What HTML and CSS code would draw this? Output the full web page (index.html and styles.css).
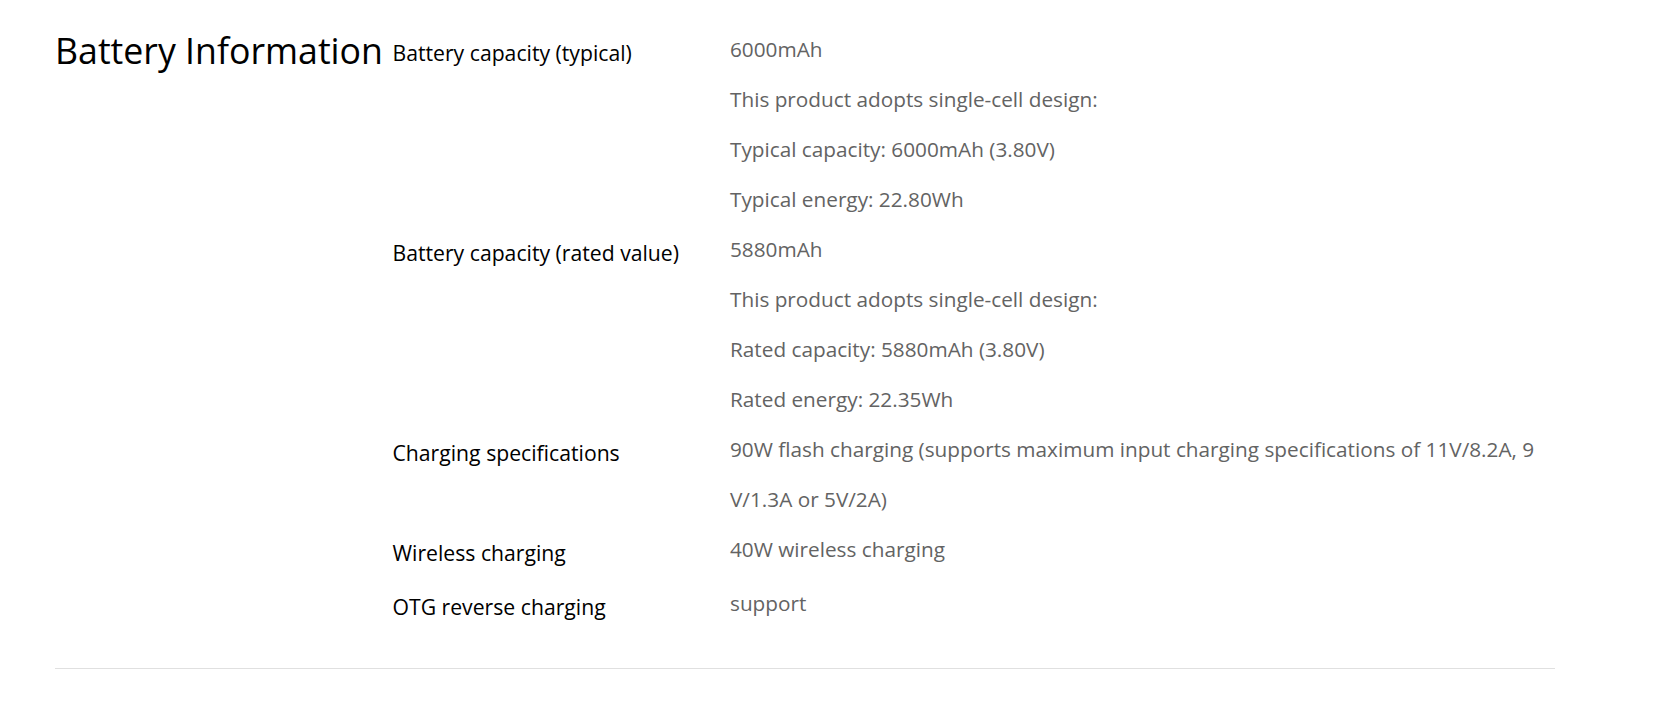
FILE: index.html
```html
<!DOCTYPE html>
<html lang="en">
<head>
<meta charset="utf-8">
<title>Battery Information</title>
<link rel="stylesheet" href="styles.css">
</head>
<body>
<section class="section">
  <h2 class="title">Battery Information</h2>
  <div class="specs">
    <div class="row">
      <div class="label">Battery capacity (typical)</div>
      <div class="value">
        <p>6000mAh</p>
        <p>This product adopts single-cell design:</p>
        <p>Typical capacity: 6000mAh (3.80V)</p>
        <p>Typical energy: 22.80Wh</p>
      </div>
    </div>
    <div class="row">
      <div class="label">Battery capacity (rated value)</div>
      <div class="value">
        <p>5880mAh</p>
        <p>This product adopts single-cell design:</p>
        <p>Rated capacity: 5880mAh (3.80V)</p>
        <p>Rated energy: 22.35Wh</p>
      </div>
    </div>
    <div class="row">
      <div class="label">Charging specifications</div>
      <div class="value">
        <p>90W flash charging (supports maximum input charging specifications of 11V/8.2A, 9 V/1.3A or 5V/2A)</p>
      </div>
    </div>
    <div class="row">
      <div class="label">Wireless charging</div>
      <div class="value">
        <p>40W wireless charging</p>
      </div>
    </div>
    <div class="row">
      <div class="label">OTG reverse charging</div>
      <div class="value">
        <p>support</p>
      </div>
    </div>
  </div>
</section>
</body>
</html>
```

FILE: styles.css
```css
html, body {
  margin: 0;
  padding: 0;
  background: #ffffff;
}

body {
  font-family: "Open Sans", "Noto Sans", sans-serif;
}

.section {
  display: flex;
  width: 1500px;
  margin-left: 55px;
  padding-top: 24px;
  padding-bottom: 36px;
  border-bottom: 1px solid #e0e0e0;
}

.title {
  flex: none;
  width: 337.5px;
  margin: 0;
  padding-top: 1px;
  font-size: 35.7px;
  font-weight: 400;
  line-height: 50px;
  color: #000000;
  white-space: nowrap;
}

.specs {
  flex: 1;
  min-width: 0;
}

.row {
  display: flex;
}

.label {
  flex: none;
  width: 337.5px;
  padding-top: 3px;
  font-size: 21.2px;
  line-height: 51px;
  color: #000000;
}

.value {
  flex: 1;
  min-width: 0;
  font-size: 20.75px;
  line-height: 50px;
  color: #636363;
}

.value p {
  margin: 0;
}
```
